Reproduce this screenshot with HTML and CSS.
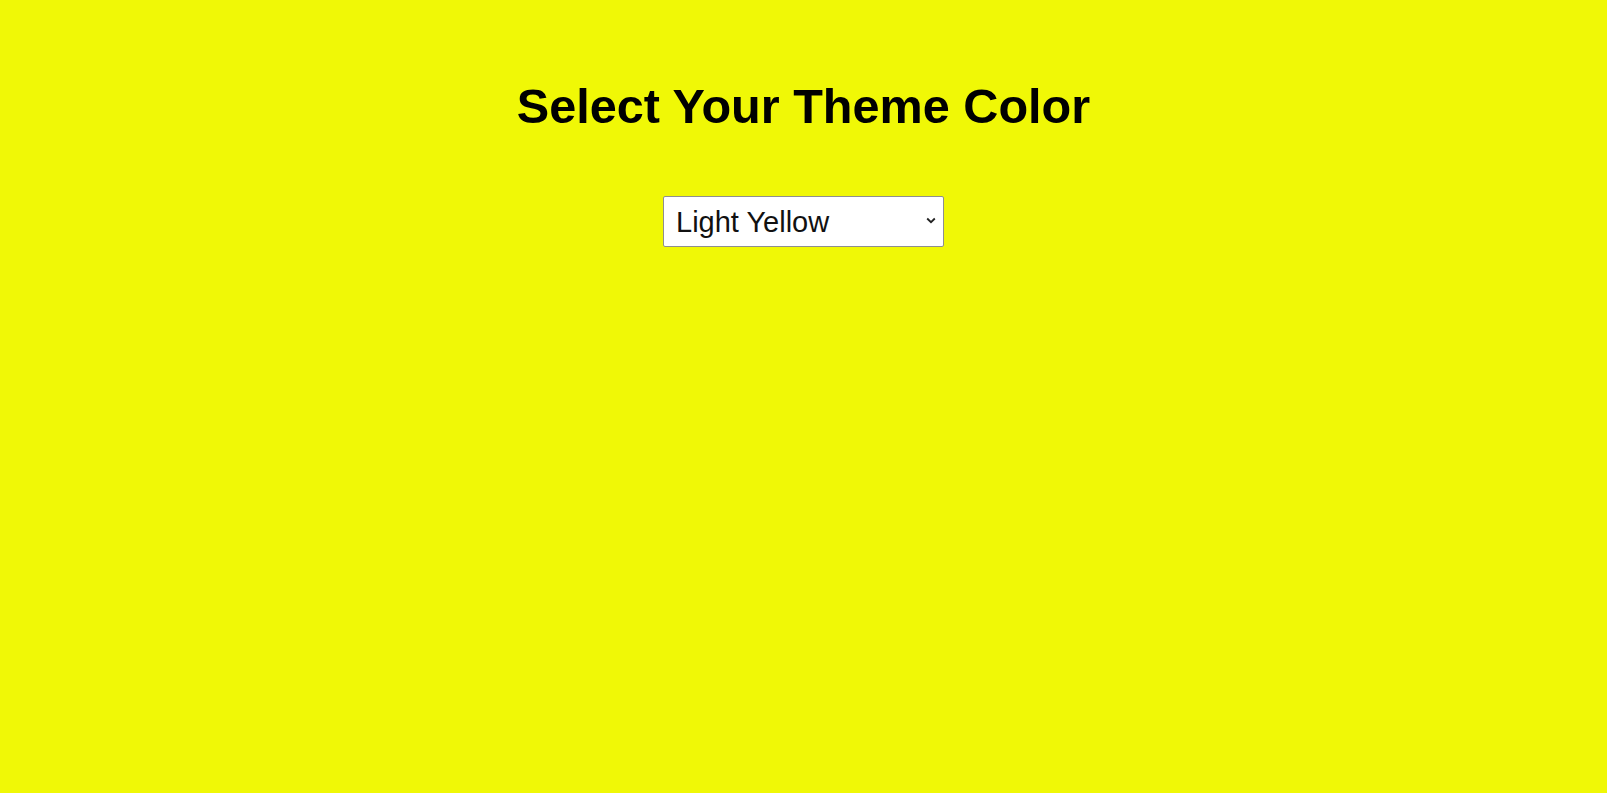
FILE: index.html
```html
<!DOCTYPE html>
<html lang="en">
<head>
<meta charset="utf-8">
<title>Theme Color</title>
<link rel="stylesheet" href="styles.css">
</head>
<body>
<main class="page">
  <h1 class="title">Select Your Theme Color</h1>
  <span class="select-wrap">
    <select class="theme-select">
      <option>Light Yellow</option>
      <option>Light Blue</option>
      <option>Light Green</option>
      <option>Light Pink</option>
    </select>
    <svg class="chevron" width="10" height="7" viewBox="0 0 10 7" aria-hidden="true">
      <path d="M1.2 1.5 L5 5.2 L8.8 1.5" fill="none" stroke="#222" stroke-width="1.8"/>
    </svg>
  </span>
</main>
</body>
</html>
```
FILE: styles.css
```css
html, body {
  margin: 0;
  padding: 0;
  height: 100%;
}
body {
  background: #f0f806;
  font-family: "Liberation Sans", Arial, sans-serif;
  color: #000;
}
.page {
  display: flex;
  flex-direction: column;
  align-items: center;
  padding-top: 79px;
}
.title {
  margin: 0;
  font-size: 48.6px;
  font-weight: bold;
  line-height: 55px;
}
.select-wrap {
  position: relative;
  display: block;
  margin-top: 62px;
  width: 281px;
  height: 51px;
}
.theme-select {
  appearance: none;
  -webkit-appearance: none;
  display: block;
  width: 100%;
  height: 100%;
  box-sizing: border-box;
  font-family: "Liberation Sans", Arial, sans-serif;
  font-size: 29px;
  padding: 0 24px 0 12px;
  border: 1px solid #8f8f8f;
  border-radius: 2px;
  background: #fff;
  color: #111;
}
.chevron {
  position: absolute;
  right: 8px;
  top: 21px;
  pointer-events: none;
}
```
